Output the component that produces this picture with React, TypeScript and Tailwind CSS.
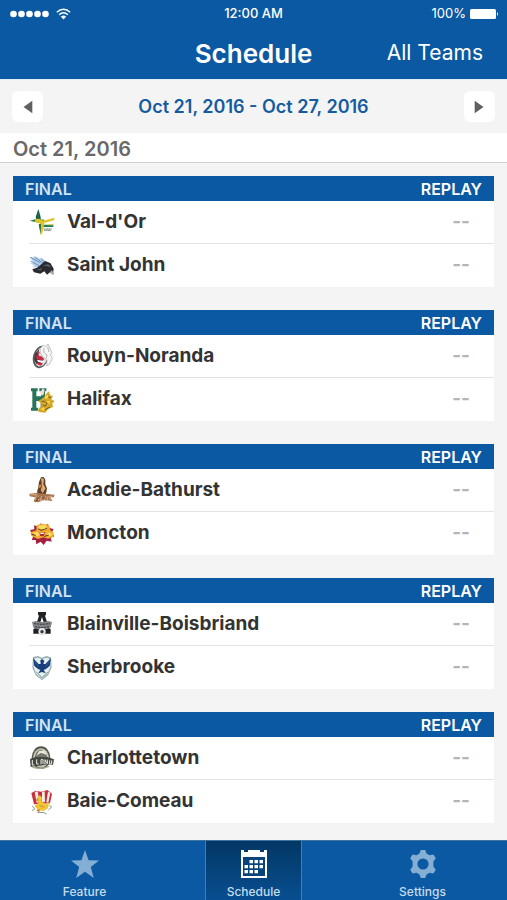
import type { ReactNode } from "react";

type Team = {
  name: string;
  logo: ReactNode;
};

type Game = {
  id: number;
  teams: Team[];
};

const logos = {
  valDor: (
    <>
      <path d="M28 0 34 20 36 32 22 33 20 24Z" fill="#17654a" />
      <path d="M2 35 22 30 46 32 40 44 22 40Z" fill="#2f7a4b" />
      <path d="M19 30 30 29 43 35 76 26 75 34 46 42 40 72 35 80 33 56 36 44 18 39Z" fill="#e0c428" />
      <path d="M29 46 36 44 35 76 31 58Z" fill="#2d6b3c" />
      <path d="M45 47H73V54H43Z" fill="#1d7a5c" />
      <path d="M58 46H73V49H56Z" fill="#dcc636" />
      <path d="M44 60H68M46 64H66" stroke="#66716b" strokeWidth="3" strokeDasharray="4 1" />
    </>
  ),
  saintJohn: (
    <>
      <path d="M2 11 22 16 18 10 36 19 35 13 54 27 36 44 8 42 17 38 3 30 15 30Z" fill="#b3cde6" />
      <path d="M4 13 34 29M15 11 43 31M5 24 30 38M36 16 47 29" stroke="#6d98c1" strokeWidth="3" />
      <path d="M37 34 48 24 64 30 74 47 72 62 63 58 54 65 46 55 34 62 15 58 10 49 24 44Z" fill="#292a31" />
      <path d="M41 37 58 34 67 43 56 40ZM22 51 39 46 36 52Z" fill="#5d6670" />
      <path d="M66 51 76 60 72 67 64 60Z" fill="#a8adb3" />
    </>
  ),
  rouynNoranda: (
    <>
      <ellipse cx="35" cy="42" rx="23" ry="34" transform="rotate(14 35 42)" fill="#55585c" />
      <ellipse cx="36" cy="42" rx="19" ry="29" transform="rotate(14 36 42)" fill="#e6e6e6" />
      <path d="M17 33 30 18 29 38 42 50 36 60 22 63 15 50Z" fill="#4a3a40" />
      <path d="M33 17 43 6 50 11 57 3 63 15 69 30 64 34 70 47 61 64 53 68 54 52 41 40 34 31Z" fill="#f6f6f4" stroke="#a3a6a8" strokeWidth="2" />
      <path d="M45 15 44 28 54 36 52 46M56 12 60 27" stroke="#8d9194" strokeWidth="2" fill="none" />
      <path d="M22 36 37 40 46 48 41 53 23 48ZM26 58 42 61 36 68 26 65Z" fill="#ca2940" />
      <path d="M24 50 44 54 39 59 27 56Z" fill="#fff" />
      <path d="M24 24 33 28 28 35Z" fill="#d94857" />
    </>
  ),
  halifax: (
    <>
      <path d="M6 4H26V13H22V28H36V13H31V4H52V13H48V69H31V62H35V42H22V62H27V71H6V62H10V13H6Z" fill="#27745b" />
      <path d="M36 13 42 3 47 10 43 25 34 25Z" fill="#f3ddd2" />
      <path d="M52 20 59 13 64 25 72 27 66 36 77 43 70 49 72 60 57 67 49 77 30 75 25 68 38 58 34 47 27 43 43 32Z" fill="#d5a829" />
      <path d="M48 27 57 24 57 34 48 35ZM51 43 63 41 61 52ZM34 66 48 61 44 71Z" fill="#f6da4d" />
      <path d="M38 43 47 43 54 49 48 58 41 53M48 68 63 60M58 30 67 33" stroke="#75581c" strokeWidth="3" fill="none" />
    </>
  ),
  acadieBathurst: (
    <>
      <path d="M30 15 36 1 44 0 49 8 49 22 54 34 51 50 31 54 24 46 28 29Z" fill="#5c3c25" />
      <path d="M36 4 45 5 43 22 50 34 41 49 35 40 39 27Z" fill="#ddaa75" />
      <path d="M29 24 38 22 36 30 28 35Z" fill="#c28850" />
      <path d="M1 50 23 48 76 53 75 61H65L70 72 44 70 27 76 14 74 18 61 2 58Z" fill="#a6734b" />
      <path d="M5 53H22L18 69M29 56V70M38 58 34 70H43M51 58 45 69M58 57 53 70H62M70 57 61 60 67 69" fill="none" stroke="#efceb0" strokeWidth="2" />
      <path d="M22 72 31 59M40 63H47" stroke="#633e29" strokeWidth="3" />
    </>
  ),
  moncton: (
    <>
      <path d="M3 27 16 25 15 13 28 17 35 7 45 14 57 9 61 20 74 25 68 35 76 46 65 50 68 62 53 59 44 72 35 62 22 70 20 57 8 57 13 46Z" fill="#a61f42" />
      <path d="M23 12 39 8 60 12 64 27 74 36 72 48 57 53 43 49 27 54 7 45 4 34 22 28Z" fill="#edac2c" />
      <path d="M28 14 47 12 54 18 48 27 27 23ZM10 35 25 33 34 40 25 47ZM56 34 69 37 67 44 54 47Z" fill="#f7dc61" />
      <path d="M28 23 36 28 47 25 54 21M8 40 20 43M46 46 59 43" fill="none" stroke="#5c3323" strokeWidth="3" />
      <path d="M31 35 48 34 44 46 34 45Z" fill="#b5263d" />
      <path d="M33 35H46L43 39H35Z" fill="#fff" />
    </>
  ),
  blainville: (
    <>
      <path d="M27 3H51V11L48 14 60 51 65 55V68H47V61H31V68H13V55L18 51 30 14 27 11Z" fill="#202225" />
      <path d="M39 18 44 34H34Z" fill="#fff" />
      <path d="M9 33 20 30 39 34 58 30 69 33 65 50 56 53 39 57 22 53 13 50Z" fill="#85898b" />
      <path d="M15 38 39 40 63 38M18 47 39 50 60 47" fill="none" stroke="#35383b" strokeWidth="3" strokeDasharray="7 2" />
      <circle cx="39" cy="62" r="11" fill="#e3e4e5" />
      <circle cx="39" cy="62" r="5" fill="#33363a" />
    </>
  ),
  sherbrooke: (
    <>
      <path d="M39 76 20 61 10 38 12 6 27 3 39 8 52 3 66 7 68 37 58 60Z" fill="#9bb0b8" />
      <path d="M39 71 22 57 14 36 15 11 27 8 39 13 52 8 63 12 64 36 55 56Z" fill="#e9f0f0" />
      <path d="M12 9 29 27 35 27 34 16 39 12 46 17 43 27 49 27 66 9 62 33 50 43 44 44 50 55 39 51 28 55 34 44 28 43 16 33Z" fill="#173f7c" />
      <path d="M17 19 29 35M61 19 49 35" stroke="#4776a5" strokeWidth="2" />
      <path d="M22 51 39 68 56 51" fill="none" stroke="#6c947f" strokeWidth="3" />
    </>
  ),
  charlottetown: (
    <>
      <ellipse cx="36" cy="38" rx="28" ry="34" fill="#55554b" />
      <ellipse cx="36" cy="39" rx="24" ry="29" fill="#c9c8b8" />
      <ellipse cx="36" cy="38" rx="18" ry="24" fill="#74766b" />
      <path d="M22 32 30 18 47 16 54 31 45 26 35 24Z" fill="#e9e8dc" />
      <path d="M3 42 19 36 55 36 75 43 72 60 54 58 28 62 5 66Z" fill="#454840" />
      <path d="M10 45V60H16M23 43V57H29M36 58V44H42V57M48 57V44L55 56V44M62 46V57H68V46" fill="none" stroke="#edece5" strokeWidth="3" />
      <path d="M10 66Q35 75 60 64" fill="none" stroke="#aaa891" strokeWidth="4" />
    </>
  ),
  baieComeau: (
    <>
      <path d="M7 12 20 5 37 8 55 3 69 14 63 43 15 46Z" fill="#c82f3b" />
      <path d="M17 9 26 7 31 38 23 42ZM39 9 47 7 48 39 39 38ZM57 8 64 11 58 41 52 40Z" fill="#f5eee8" />
      <path d="M24 24 33 19 39 26 38 37 52 46 61 40 57 58 43 66 26 63 17 50 28 42Z" fill="#efc536" />
      <path d="M19 33 28 28 27 37ZM21 64 33 60 31 70Z" fill="#e17b2a" />
      <path d="M9 51 18 59 9 65M61 50 68 54 58 63M25 70 45 71 53 75" fill="none" stroke="#84a08b" strokeWidth="3" />
      <path d="M32 50 46 55" stroke="#c9922e" strokeWidth="3" />
    </>
  ),
};

const games: Game[] = [
  { id: 1, teams: [{ name: "Val-d'Or", logo: logos.valDor }, { name: "Saint John", logo: logos.saintJohn }] },
  { id: 2, teams: [{ name: "Rouyn-Noranda", logo: logos.rouynNoranda }, { name: "Halifax", logo: logos.halifax }] },
  { id: 3, teams: [{ name: "Acadie-Bathurst", logo: logos.acadieBathurst }, { name: "Moncton", logo: logos.moncton }] },
  { id: 4, teams: [{ name: "Blainville-Boisbriand", logo: logos.blainville }, { name: "Sherbrooke", logo: logos.sherbrooke }] },
  { id: 5, teams: [{ name: "Charlottetown", logo: logos.charlottetown }, { name: "Baie-Comeau", logo: logos.baieComeau }] },
];

function StatusBar() {
  return (
    <div className="grid grid-cols-3 items-center h-7 px-2 text-[13px] text-white">
      <div className="flex items-center gap-1">
        <svg width="44" height="10" viewBox="0 0 44 10" fill="#fff">
          {[5, 13, 21, 29, 37].map((x) => (
            <circle key={x} cx={x + 0.5} cy="5" r="3.3" />
          ))}
        </svg>
        <svg width="15" height="12" viewBox="0 0 15 12" fill="none" stroke="#fff" strokeWidth="1.4">
          <path d="M.8 4.2Q7.5-1.7 14.2 4.2M3.1 6.7Q7.5 2.9 11.9 6.7" />
          <path d="M4.8 8.5Q7.5 6.5 10.2 8.5L7.5 11.4Z" fill="#fff" stroke="none" />
        </svg>
      </div>
      <span className="text-center font-medium">12:00 AM</span>
      <div className="flex items-center justify-end gap-1">
        <span>100%</span>
        <svg width="29" height="12" viewBox="0 0 29 12" fill="#fff">
          <rect x="0" y="1" width="26" height="10" rx="1.5" />
          <path d="M27 4Q29 6 27 8Z" />
        </svg>
      </div>
    </div>
  );
}

function GameCard({ game }: { game: Game }) {
  return (
    <article className="bg-white">
      <div className="flex items-center justify-between h-[25px] px-3 bg-[#0b59a2] text-base font-semibold">
        <span className="text-[#d3e3f2]">FINAL</span>
        <button type="button" className="text-white">
          REPLAY
        </button>
      </div>
      <ul className="pl-4">
        {game.teams.map((team) => (
          <li
            key={team.name}
            className="flex items-center h-[43px] pr-6 border-b border-[#e4e4e4] last:border-b-0"
          >
            <svg width="26" height="26" viewBox="0 0 78 78">
              {team.logo}
            </svg>
            <span className="flex-1 ml-3 text-[19px] font-bold text-[#333]">
              {team.name}
            </span>
            <span className="text-[19px] font-bold text-[#b5b5b5]">--</span>
          </li>
        ))}
      </ul>
    </article>
  );
}

function TabBar() {
  return (
    <nav className="grid grid-cols-3 h-[60px] mt-auto border-t border-[#3c749f] bg-[#0b59a2] text-xs font-medium text-[#c5dcef]">
      <a href="#feature" className="flex flex-col items-center justify-between pt-2">
        <svg width="30" height="30" viewBox="0 0 30 30" fill="#84aed3">
          <path d="M15 1 18.6 11.3 29 11.5 20.8 18 23.8 29 15 22.7 6.2 29 9.2 18 1 11.5 11.4 11.3Z" />
        </svg>
        Feature
      </a>
      <a
        href="#schedule"
        className="flex flex-col items-center justify-between w-[97px] mx-auto pt-2 border-x border-[#4d7da5] bg-linear-to-b from-[#033764] to-[#084f91]"
      >
        <svg width="28" height="30" viewBox="0 0 28 30">
          <path d="M1 1H4V3H8V1H20V3H24V1H27V29H1Z" fill="#fff" />
          <path d="M3 8H25V27H3Z" fill="#07447b" />
          <path
            d="M9.5 11H13V14.2H9.5ZM14.5 11H18V14.2H14.5ZM19.5 11H23V14.2H19.5ZM4.5 16H8V19.2H4.5ZM9.5 16H13V19.2H9.5ZM14.5 16H18V19.2H14.5ZM19.5 16H23V19.2H19.5ZM4.5 21H8V24.2H4.5ZM9.5 21H13V24.2H9.5ZM14.5 21H18V24.2H14.5Z"
            fill="#fff"
          />
        </svg>
        Schedule
      </a>
      <a href="#settings" className="flex flex-col items-center justify-between pt-2">
        <svg width="30" height="30" viewBox="0 0 30 30" fill="#84aed3" fillRule="evenodd">
          <path d="M12.8 1H17.2L18.5 4.6 21.6 6.2 25.4 5.5 27.8 9.3 25.4 12.6V17.4L27.8 20.7 25.4 24.5 21.6 23.8 18.5 25.4 17.2 29H12.8L11.5 25.4 8.4 23.8 4.6 24.5 2.2 20.7 4.6 17.4V12.6L2.2 9.3 4.6 5.5 8.4 6.2 11.5 4.6ZM15 9.4A5.6 5.6 0 1 0 15 20.6 5.6 5.6 0 1 0 15 9.4Z" />
        </svg>
        Settings
      </a>
    </nav>
  );
}

export default function App() {
  return (
    <div className="flex flex-col min-h-screen bg-[#f4f4f4] font-['Inter',sans-serif]">
      <header className="h-[79px] bg-[#0b59a2] text-white">
        <StatusBar />
        <div className="grid grid-cols-3 items-center h-[50px]">
          <h1 className="col-start-2 text-center text-[26px] font-semibold">Schedule</h1>
          <button type="button" className="justify-self-end mr-6 text-[21px]">
            All Teams
          </button>
        </div>
      </header>

      <div className="flex items-center justify-between h-[54px] px-3 border-t border-[#e1edf7]">
        <button
          type="button"
          aria-label="Previous week"
          className="flex items-center justify-center size-[31px] rounded-md bg-white"
        >
          <svg width="10" height="14" viewBox="0 0 10 14" fill="#606060">
            <path d="M9.3.8V13.2L.5 7Z" />
          </svg>
        </button>
        <span className="text-lg font-semibold text-[#155b9f]">
          Oct 21, 2016 - Oct 27, 2016
        </span>
        <button
          type="button"
          aria-label="Next week"
          className="flex items-center justify-center size-[31px] rounded-md bg-white"
        >
          <svg width="10" height="14" viewBox="0 0 10 14" fill="#606060">
            <path d="M.7.8V13.2L9.5 7Z" />
          </svg>
        </button>
      </div>

      <h2 className="h-[30px] px-[13px] border-b border-[#cfcfd1] bg-white text-xl leading-8 font-semibold text-[#696969]">
        Oct 21, 2016
      </h2>

      <main className="flex flex-col gap-[23px] px-[13px] pt-[13px] pb-4">
        {games.map((game) => (
          <GameCard key={game.id} game={game} />
        ))}
      </main>

      <TabBar />
    </div>
  );
}
